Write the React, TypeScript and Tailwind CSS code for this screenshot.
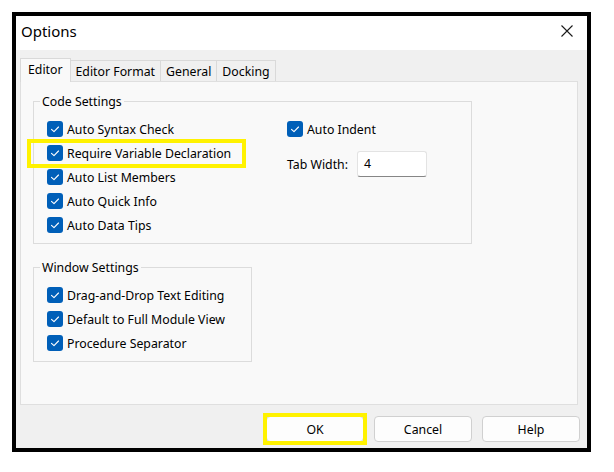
import React from "react";

const Check = () => (
  <span className="w-[16px] h-[16px] rounded-[3px] bg-[#005fb8] flex items-center justify-center shrink-0">
    <svg width="16" height="16" viewBox="0 0 16 16">
      <path d="M4.5 8.3 L7 10.7 L11.5 6" fill="none" stroke="#ffffff" strokeWidth="1.1" strokeLinecap="round" strokeLinejoin="round" />
    </svg>
  </span>
);

const CheckRow = ({ label, highlight = false }: { label: string; highlight?: boolean }) => (
  <div className="relative flex items-center gap-[4px] h-[16px] leading-[16px]">
    <Check />
    <span className="whitespace-nowrap pt-[1px]">{label}</span>
    {highlight && (
      <div className="absolute left-[-20px] top-[-6px] w-[219px] h-[29px] border-[4px] border-[#fff200]" />
    )}
  </div>
);

const Group = ({ title, className, children }: { title: string; className: string; children: React.ReactNode }) => (
  <div className={`relative border border-[#dcdcdc] ${className}`}>
    <div className="absolute left-[6px] -top-[8px] px-[2px] bg-[#f9f9f9] leading-[16px] whitespace-nowrap">{title}</div>
    {children}
  </div>
);

export default function App() {
  return (
    <div className="w-[614px] h-[472px] bg-white p-3 font-['Noto_Sans',sans-serif] text-[12.3px] text-black">
      <div className="w-[579px] h-[440px] border-4 border-black flex flex-col bg-[#f0f0f0]">
        <div className="h-[34px] shrink-0 bg-white flex items-center justify-between pl-[5px] pr-[14px] pb-[4px]">
          <span className="text-[15px] leading-[20px]">Options</span>
          <svg width="12" height="12" viewBox="0 0 12 12">
            <path d="M0.5 0.5 L11.5 11.5 M11.5 0.5 L0.5 11.5" stroke="#1a1a1a" strokeWidth="1.1" />
          </svg>
        </div>
        <div className="flex-1 flex flex-col pl-[4px] pr-[9px] pt-[8px]">
          <div className="flex items-end h-[23px]">
            <div className="relative z-10 h-[24px] -mb-px px-[7px] pt-[2px] bg-[#f9f9f9] border border-b-0 border-[#d9d9d9] leading-[18px]">
              Editor
            </div>
            <div className="h-[21px] -ml-px px-[5px] pt-[2px] border border-b-0 border-[#d9d9d9] leading-[18px] bg-[#f0f0f0]">
              Editor Format
            </div>
            <div className="h-[21px] -ml-px px-[5px] pt-[2px] border border-b-0 border-[#d9d9d9] leading-[18px] bg-[#f0f0f0]">
              General
            </div>
            <div className="h-[21px] -ml-px px-[5px] pt-[2px] border border-b-0 border-[#d9d9d9] leading-[18px] bg-[#f0f0f0]">
              Docking
            </div>
          </div>
          <div className="h-[324px] bg-[#f9f9f9] border border-[#dfdfdf] pl-[12px] pt-[19px] flex flex-col">
            <Group title="Code Settings" className="w-[439px] h-[143px] pl-[13px] pt-[19px]">
              <div className="flex">
                <div className="w-[240px] flex flex-col gap-[8px]">
                  <CheckRow label="Auto Syntax Check" />
                  <CheckRow label="Require Variable Declaration" highlight />
                  <CheckRow label="Auto List Members" />
                  <CheckRow label="Auto Quick Info" />
                  <CheckRow label="Auto Data Tips" />
                </div>
                <div className="flex flex-col">
                  <CheckRow label="Auto Indent" />
                  <div className="flex items-center mt-[14px]">
                    <span className="w-[70px] leading-[16px] pt-[1px]">Tab Width:</span>
                    <div className="w-[70px] h-[26px] bg-white border border-[#e3e3e3] border-b-[#868686] rounded-[3px] pl-[6px] flex items-center">
                      4
                    </div>
                  </div>
                </div>
              </div>
            </Group>
            <Group title="Window Settings" className="mt-[23px] w-[219px] h-[95px] pl-[13px] pt-[19px]">
              <div className="flex flex-col gap-[8px]">
                <CheckRow label="Drag-and-Drop Text Editing" />
                <CheckRow label="Default to Full Module View" />
                <CheckRow label="Procedure Separator" />
              </div>
            </Group>
          </div>
          <div className="flex justify-end gap-[10px] mt-[11px] -mr-[2px]">
            <div className="relative">
              <button className="w-[98px] h-[26px] pt-[1px] bg-[#fdfdfd] border border-[#d0d0d0] rounded-[4px] leading-[16px]">OK</button>
              <div className="absolute -inset-[3px] border-[4px] border-[#fff200]" />
            </div>
            <button className="w-[98px] h-[26px] pt-[1px] bg-[#fdfdfd] border border-[#d0d0d0] rounded-[4px] leading-[16px]">Cancel</button>
            <button className="w-[98px] h-[26px] pt-[1px] bg-[#fdfdfd] border border-[#d0d0d0] rounded-[4px] leading-[16px]">Help</button>
          </div>
        </div>
      </div>
    </div>
  );
}
